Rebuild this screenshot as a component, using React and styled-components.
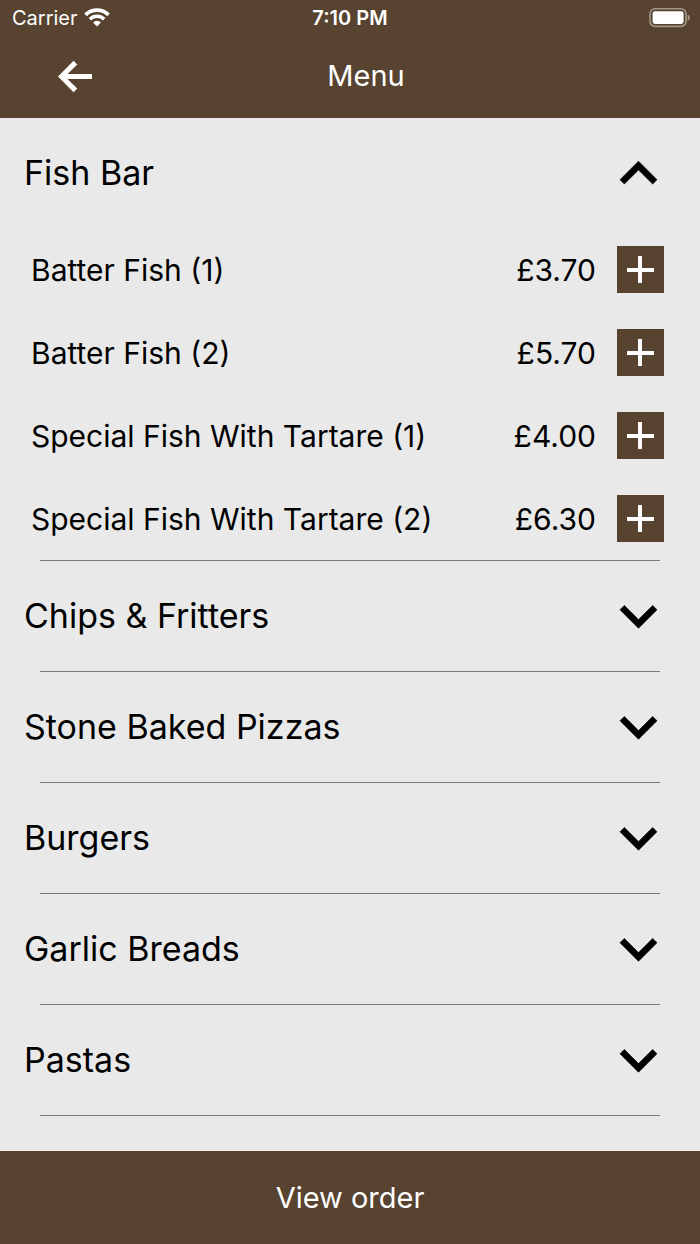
import React, { useState } from "react";
import styled, { createGlobalStyle } from "styled-components";

const BROWN = "#574330";
const PAPER = "#e9e9e9";

const GlobalStyle = createGlobalStyle`
  *, *::before, *::after { box-sizing: border-box; }
  body {
    margin: 0;
    background: ${PAPER};
    color: #000;
    font-family: Inter, "Liberation Sans", sans-serif;
  }
  button { font: inherit; color: inherit; border: 0; padding: 0; cursor: pointer; }
  h1, h2, ul { margin: 0; padding: 0; font: inherit; }
`;

const Screen = styled.div`
  display: flex;
  flex-direction: column;
  min-height: 100vh;
`;

const Header = styled.header`
  background: ${BROWN};
  color: #fff;
`;

const StatusBar = styled.div`
  display: grid;
  grid-template-columns: 1fr auto 1fr;
  align-items: center;
  height: 36px;
  padding: 0 10px;
  font-size: 20px;
  line-height: 24px;
`;

const Carrier = styled.div`
  display: flex;
  align-items: center;
  gap: 6px;
  padding-left: 2px;
`;

const Clock = styled.time`
  font-weight: 600;
`;

const BatteryIcon = styled.svg`
  justify-self: end;
`;

const NavBar = styled.nav`
  display: grid;
  grid-template-columns: 92px 1fr 60px;
  align-items: center;
  height: 82px;
  padding-bottom: 2px;
`;

const BackButton = styled.button`
  display: flex;
  align-items: center;
  justify-content: center;
  width: 34px;
  height: 48px;
  justify-self: end;
  background: none;
`;

const Title = styled.h1`
  font-size: 29px;
  line-height: 36px;
  text-align: center;
`;

const MenuList = styled.main`
  flex: 1;
`;

const Category = styled.section`
  &::after {
    content: "";
    display: block;
    height: 1px;
    margin: 0 40px;
    background: #7b7b7b;
  }
`;

const CategoryToggle = styled.button`
  display: flex;
  align-items: center;
  justify-content: space-between;
  width: 100%;
  height: 110px;
  padding: 0 43px 0 24px;
  background: none;
  font-size: 34px;
  line-height: 44px;
  text-align: left;
`;

const ItemList = styled.ul`
  list-style: none;
`;

const Item = styled.li`
  display: flex;
  align-items: center;
  height: 83px;
  padding: 0 36px 0 31px;
  font-size: 30px;
  line-height: 36px;
`;

const ItemName = styled.span`
  flex: 1;
`;

const AddButton = styled.button`
  display: flex;
  align-items: center;
  justify-content: center;
  width: 47px;
  height: 47px;
  margin-left: 21px;
  background: ${BROWN};
`;

const OrderButton = styled.button`
  height: 93px;
  background: ${BROWN};
  color: #fff;
  font-size: 29px;
  line-height: 36px;
`;

const categories = [
  {
    name: "Fish Bar",
    items: [
      { name: "Batter Fish (1)", price: "£3.70" },
      { name: "Batter Fish (2)", price: "£5.70" },
      { name: "Special Fish With Tartare (1)", price: "£4.00" },
      { name: "Special Fish With Tartare (2)", price: "£6.30" },
    ],
  },
  { name: "Chips & Fritters", items: [] },
  { name: "Stone Baked Pizzas", items: [] },
  { name: "Burgers", items: [] },
  { name: "Garlic Breads", items: [] },
  { name: "Pastas", items: [] },
];

function Wifi() {
  return (
    <svg width="26" height="20" viewBox="0 0 26 20" fill="none" stroke="#fff" aria-hidden="true">
      <path d="M1.55 6.95a16.2 16.2 0 0 1 22.9 0" strokeWidth="3.8" />
      <path d="M5.86 11.26a10.1 10.1 0 0 1 14.28 0" strokeWidth="3.4" />
      <path d="M13 18.4l-3.96-3.96a5.6 5.6 0 0 1 7.92 0z" fill="#fff" stroke="none" />
    </svg>
  );
}

function Battery() {
  return (
    <BatteryIcon width="41" height="20" viewBox="0 0 41 20" aria-hidden="true">
      <rect x="1" y="0.8" width="36" height="17.6" rx="5" fill="none" stroke="#a1968b" strokeWidth="1.6" />
      <rect x="3.6" y="3.2" width="31" height="12.8" rx="2.4" fill="#fff" />
      <path d="M38.6 6.4c3 1 3 5.400 0 6.400z" fill="#a1968b" />
    </BatteryIcon>
  );
}

function BackArrow() {
  return (
    <svg width="34" height="33" viewBox="0 0 34 33" fill="#fff" aria-hidden="true">
      <path d="M0 16.500L15.500 .7L19.300 4.500L9.500 14H34V19H9.500L19.300 28.500L15.500 32.300Z" />
    </svg>
  );
}

function Chevron({ up }) {
  return (
    <svg width="37" height="37" viewBox="6 6 12 12" stroke="#000" strokeWidth="0.2" overflow="visible" aria-hidden="true">
      <path
        d={
          up
            ? "M12 8l-6 6 1.410 1.410L12 10.830l4.590 4.580L18 14z"
            : "M16.590 8.400L12 12.980 7.410 8.400 6 9.810l6 6 6-6z"
        }
      />
    </svg>
  );
}

function Plus() {
  return (
    <svg width="27" height="27" viewBox="0 0 27 27" stroke="#fff" strokeWidth="4" aria-hidden="true">
      <path d="M13 0V27M0 14H27" />
    </svg>
  );
}

export default function App() {
  const [open, setOpen] = useState("Fish Bar");

  return (
    <Screen>
      <GlobalStyle />
      <Header>
        <StatusBar>
          <Carrier>
            Carrier
            <Wifi />
          </Carrier>
          <Clock>7:10 PM</Clock>
          <Battery />
        </StatusBar>
        <NavBar>
          <BackButton aria-label="Back">
            <BackArrow />
          </BackButton>
          <Title>Menu</Title>
        </NavBar>
      </Header>
      <MenuList>
        {categories.map(({ name, items }) => {
          const expanded = open === name;
          return (
            <Category key={name}>
              <h2>
                <CategoryToggle aria-expanded={expanded} onClick={() => setOpen(expanded ? null : name)}>
                  {name}
                  <Chevron up={expanded} />
                </CategoryToggle>
              </h2>
              {expanded && (
                <ItemList>
                  {items.map((item) => (
                    <Item key={item.name}>
                      <ItemName>{item.name}</ItemName>
                      <span>{item.price}</span>
                      <AddButton aria-label={`Add ${item.name}`}>
                        <Plus />
                      </AddButton>
                    </Item>
                  ))}
                </ItemList>
              )}
            </Category>
          );
        })}
      </MenuList>
      <OrderButton>View order</OrderButton>
    </Screen>
  );
}
